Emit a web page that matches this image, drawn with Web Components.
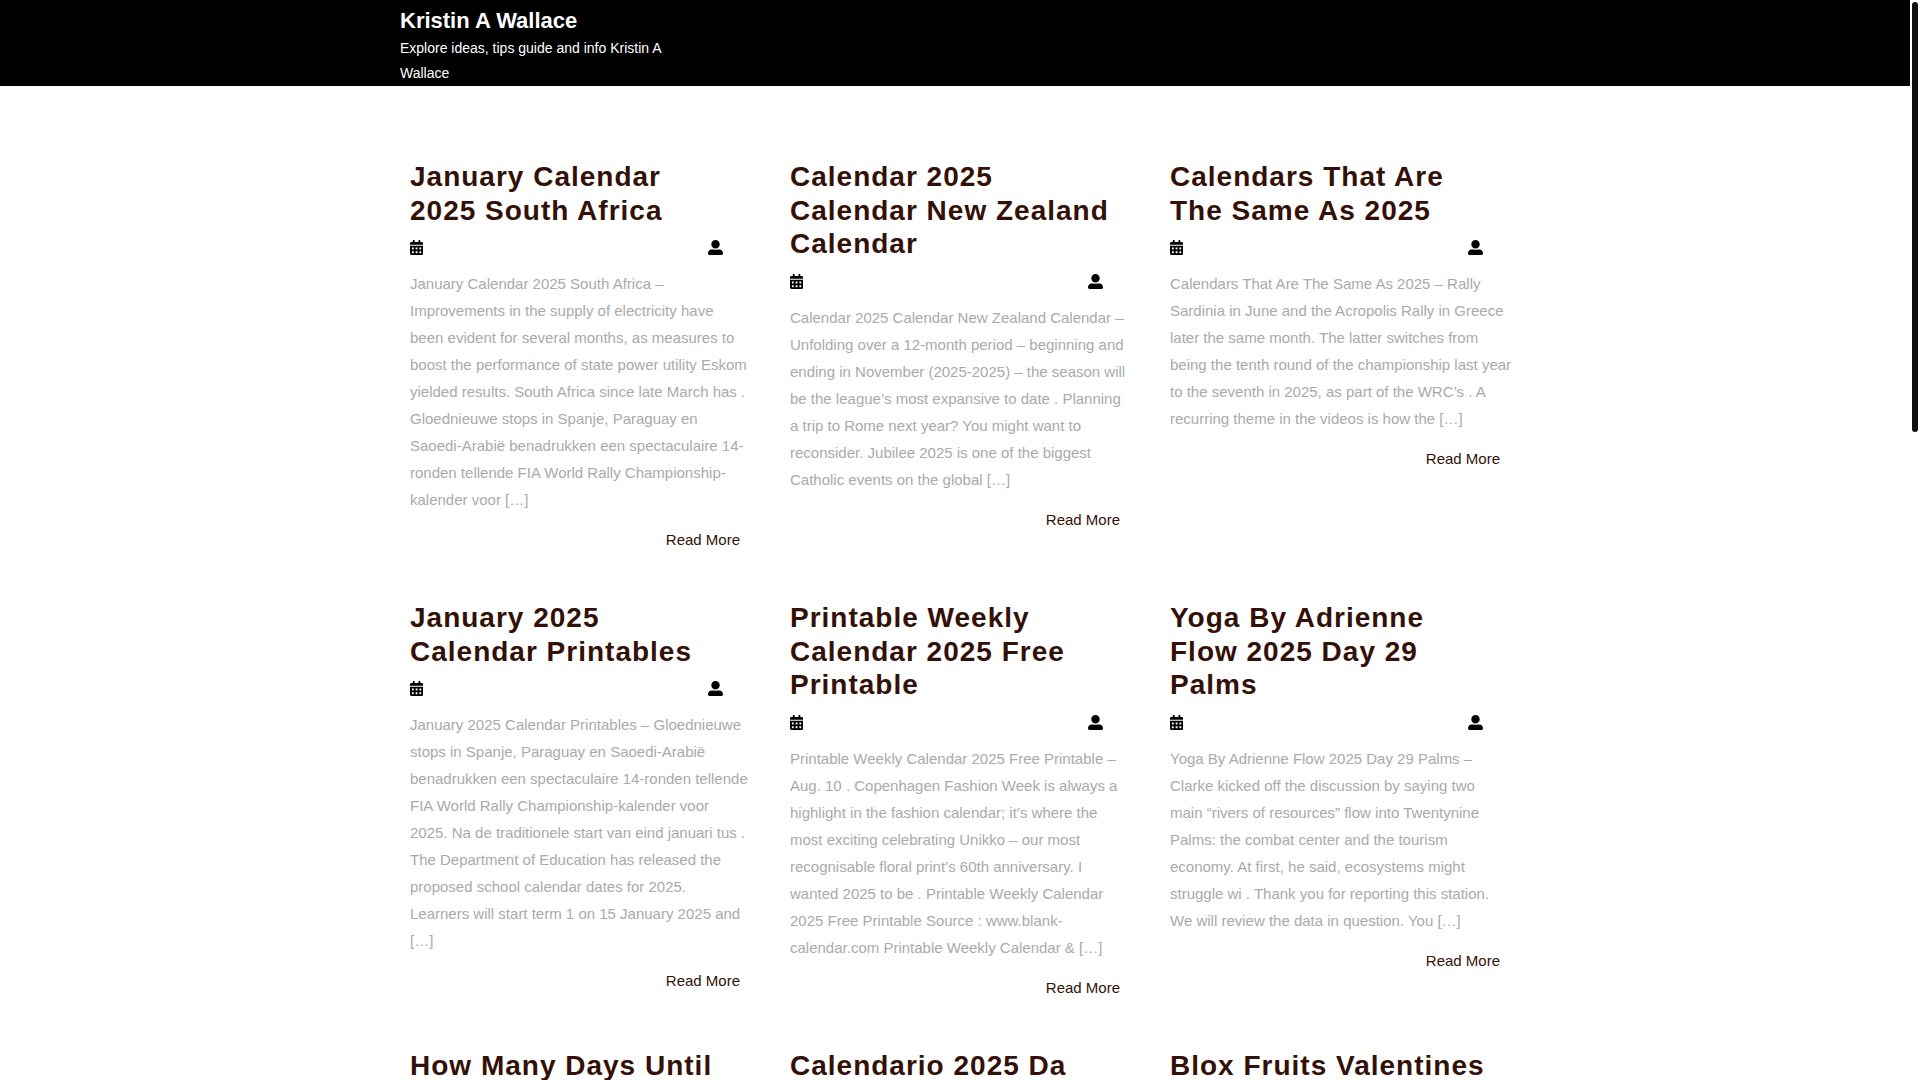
<!DOCTYPE html>
<html lang="en">
<head>
<meta charset="utf-8">
<meta name="viewport" content="width=device-width, initial-scale=1">
<title>Kristin A Wallace</title>
<style>
  body {
    margin: 0;
    background: #fff;
    color: #aaa;
    font-family: "Liberation Sans", Arial, sans-serif;
    font-size: 15px;
    line-height: 27px;
  }
</style>
</head>
<body>
<page-shell>
  <site-header slot="header" name="Kristin A Wallace">Explore ideas, tips guide and info Kristin A Wallace</site-header>
  <post-grid>
    <post-card>
      <span slot="heading">January Calendar <br>2025 South Africa</span>
      <span>January Calendar 2025 South Africa – <br>Improvements in the supply of electricity have <br>been evident for several months, as measures to <br>boost the performance of state power utility Eskom <br>yielded results. South Africa since late March has . <br>Gloednieuwe stops in Spanje, Paraguay en <br>Saoedi-Arabië benadrukken een spectaculaire 14-<br>ronden tellende FIA World Rally Championship-<br>kalender voor […]</span>
    </post-card>
    <post-card>
      <span slot="heading">Calendar 2025 <br>Calendar New Zealand <br>Calendar</span>
      <span>Calendar 2025 Calendar New Zealand Calendar – <br>Unfolding over a 12-month period – beginning and <br>ending in November (2025-2025) – the season will <br>be the league’s most expansive to date . Planning <br>a trip to Rome next year? You might want to <br>reconsider. Jubilee 2025 is one of the biggest <br>Catholic events on the global […]</span>
    </post-card>
    <post-card>
      <span slot="heading">Calendars That Are <br>The Same As 2025</span>
      <span>Calendars That Are The Same As 2025 – Rally <br>Sardinia in June and the Acropolis Rally in Greece <br>later the same month. The latter switches from <br>being the tenth round of the championship last year <br>to the seventh in 2025, as part of the WRC’s . A <br>recurring theme in the videos is how the […]</span>
    </post-card>
    <post-card>
      <span slot="heading">January 2025 <br>Calendar Printables</span>
      <span>January 2025 Calendar Printables – Gloednieuwe <br>stops in Spanje, Paraguay en Saoedi-Arabië <br>benadrukken een spectaculaire 14-ronden tellende <br>FIA World Rally Championship-kalender voor <br>2025. Na de traditionele start van eind januari tus . <br>The Department of Education has released the <br>proposed school calendar dates for 2025. <br>Learners will start term 1 on 15 January 2025 and <br>[…]</span>
    </post-card>
    <post-card>
      <span slot="heading">Printable Weekly <br>Calendar 2025 Free <br>Printable</span>
      <span>Printable Weekly Calendar 2025 Free Printable – <br>Aug. 10 . Copenhagen Fashion Week is always a <br>highlight in the fashion calendar; it’s where the <br>most exciting celebrating Unikko – our most <br>recognisable floral print’s 60th anniversary. I <br>wanted 2025 to be . Printable Weekly Calendar <br>2025 Free Printable Source : www.blank-<br>calendar.com Printable Weekly Calendar &amp; […]</span>
    </post-card>
    <post-card>
      <span slot="heading">Yoga By Adrienne <br>Flow 2025 Day 29 <br>Palms</span>
      <span>Yoga By Adrienne Flow 2025 Day 29 Palms – <br>Clarke kicked off the discussion by saying two <br>main “rivers of resources” flow into Twentynine <br>Palms: the combat center and the tourism <br>economy. At first, he said, ecosystems might <br>struggle wi . Thank you for reporting this station. <br>We will review the data in question. You […]</span>
    </post-card>
    <post-card>
      <span slot="heading">How Many Days Until</span>
    </post-card>
    <post-card>
      <span slot="heading">Calendario 2025 Da</span>
    </post-card>
    <post-card>
      <span slot="heading">Blox Fruits Valentines</span>
    </post-card>
  </post-grid>
</page-shell>

<script>
  class PageShell extends HTMLElement {
    constructor() {
      super();
      this.attachShadow({ mode: 'open' });
    }

    connectedCallback() {
      this.shadowRoot.innerHTML = `
        <style>
          :host {
            display: grid;
            grid-template-columns: minmax(0, 1fr) 10px;
            height: 100vh;
            overflow: hidden;
          }
          .view {
            overflow-y: auto;
            scrollbar-width: none;
          }
          .track {
            box-sizing: border-box;
            padding: 2px;
          }
          .thumb {
            height: 40%;
            border-radius: 3px;
            background: #0f1110;
          }
        </style>
        <div class="view">
          <slot name="header"></slot>
          <main><slot></slot></main>
        </div>
        <div class="track" aria-hidden="true"><div class="thumb"></div></div>
      `;
    }
  }

  class SiteHeader extends HTMLElement {
    constructor() {
      super();
      this.attachShadow({ mode: 'open' });
    }

    connectedCallback() {
      const name = this.getAttribute('name') || '';

      this.shadowRoot.innerHTML = `
        <style>
          :host {
            display: block;
            background: #000;
            color: #fff;
          }
          header {
            box-sizing: border-box;
            max-width: 1140px;
            margin: 0 auto;
            padding: 5px 15px 0;
          }
          h1 {
            margin: 0;
            font-size: 22px;
            line-height: 31px;
          }
          a {
            color: inherit;
            text-decoration: none;
          }
          p {
            max-width: 270px;
            margin: 0;
            font-size: 14px;
            line-height: 25px;
          }
        </style>
        <header>
          <h1><a href="#">${name}</a></h1>
          <p><slot></slot></p>
        </header>
      `;
    }
  }

  class PostGrid extends HTMLElement {
    constructor() {
      super();
      this.attachShadow({ mode: 'open' });
    }

    connectedCallback() {
      this.shadowRoot.innerHTML = `
        <style>
          :host {
            box-sizing: border-box;
            display: grid;
            grid-template-columns: repeat(auto-fit, minmax(280px, 1fr));
            gap: 48px 50px;
            max-width: 1140px;
            margin: 0 auto;
            padding: 74px 25px 48px;
          }
        </style>
        <slot></slot>
      `;
    }
  }

  class PostCard extends HTMLElement {
    constructor() {
      super();
      this.attachShadow({ mode: 'open' });
    }

    connectedCallback() {
      this.shadowRoot.innerHTML = `
        <style>
          :host {
            display: block;
            min-width: 0;
          }
          h2 {
            margin: 0;
            font-size: 28px;
            line-height: 1.2;
            letter-spacing: 1px;
          }
          a {
            color: #331108;
            text-decoration: none;
          }
          .meta {
            display: flex;
            align-items: center;
            justify-content: space-between;
            height: 27px;
            padding: 7px 17px 9px 0;
          }
          svg {
            display: block;
            height: 15px;
            fill: #000;
          }
          p {
            margin: 0 0 13px;
          }
          .more {
            text-align: right;
          }
          /* keep the authored line breaks while the full column fits */
          @media (min-width: 1150px) {
            h2, p {
              white-space: nowrap;
            }
          }
        </style>
        <article>
          <h2><a href="#"><slot name="heading"></slot></a></h2>
          <div class="meta">
            <svg viewBox="0 0 448 512" aria-hidden="true"><path d="M0 464c0 26.500 21.500 48 48 48h352c26.500 0 48-21.500 48-48V192H0v272zm320-196c0-6.600 5.400-12 12-12h40c6.600 0 12 5.400 12 12v40c0 6.600-5.400 12-12 12h-40c-6.600 0-12-5.400-12-12v-40zm0 128c0-6.600 5.400-12 12-12h40c6.600 0 12 5.400 12 12v40c0 6.600-5.400 12-12 12h-40c-6.600 0-12-5.400-12-12v-40zM192 268c0-6.600 5.400-12 12-12h40c6.600 0 12 5.400 12 12v40c0 6.600-5.400 12-12 12h-40c-6.600 0-12-5.400-12-12v-40zm0 128c0-6.600 5.400-12 12-12h40c6.600 0 12 5.400 12 12v40c0 6.600-5.400 12-12 12h-40c-6.600 0-12-5.400-12-12v-40zM64 268c0-6.600 5.400-12 12-12h40c6.600 0 12 5.400 12 12v40c0 6.600-5.400 12-12 12H76c-6.600 0-12-5.400-12-12v-40zm0 128c0-6.600 5.400-12 12-12h40c6.600 0 12 5.400 12 12v40c0 6.600-5.400 12-12 12H76c-6.600 0-12-5.400-12-12v-40zM400 64h-48V16c0-8.800-7.200-16-16-16h-32c-8.800 0-16 7.200-16 16v48H160V16c0-8.800-7.200-16-16-16h-32c-8.800 0-16 7.200-16 16v48H48C21.500 64 0 85.500 0 112v48h448v-48c0-26.500-21.500-48-48-48z"/></svg>
            <svg viewBox="0 0 512 512" aria-hidden="true"><path d="M256 288c79.500 0 144-64.500 144-144S335.500 0 256 0 112 64.500 112 144s64.500 144 144 144zm128 32h-55.100c-22.200 10.200-46.900 16-72.900 16s-50.600-5.800-72.900-16H128C57.300 320 0 377.300 0 448v16c0 26.500 21.500 48 48 48h416c26.500 0 48-21.500 48-48v-16c0-70.700-57.300-128-128-128z"/></svg>
          </div>
          <p><slot></slot></p>
          <div class="more"><a href="#">Read More</a></div>
        </article>
      `;
    }
  }

  customElements.define('page-shell', PageShell);
  customElements.define('site-header', SiteHeader);
  customElements.define('post-grid', PostGrid);
  customElements.define('post-card', PostCard);
</script>
</body>
</html>
